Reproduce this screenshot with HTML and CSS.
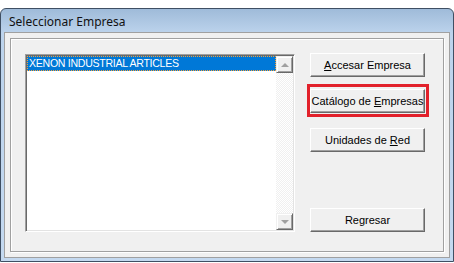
FILE: index.html
```html
<!DOCTYPE html>
<html lang="es">
<head>
    <meta charset="UTF-8">
    <title>Seleccionar Empresa</title>
    <link rel="stylesheet" href="styles.css">
</head>
<body>
    <div class="window">
        <div class="titlebar">Seleccionar Empresa</div>
        <div class="client">
            <div class="group">
                <div class="listbox">
                    <div class="items">
                        <div class="item selected">XENON INDUSTRIAL ARTICLES</div>
                    </div>
                    <div class="scrollbar">
                        <div class="sb-btn"><span class="arrow up"></span></div>
                        <div class="sb-track"></div>
                        <div class="sb-btn"><span class="arrow down"></span></div>
                    </div>
                </div>
                <div class="actions">
                    <button class="btn btn-first"><u>A</u>ccesar Empresa</button>
                    <div class="highlight">
                        <button class="btn">Catálogo de <u>E</u>mpresas</button>
                    </div>
                    <button class="btn btn-red">Unidades de <u>R</u>ed</button>
                    <button class="btn btn-back">Regresar</button>
                </div>
            </div>
        </div>
    </div>
</body>
</html>
```

FILE: styles.css
```css
* {
    box-sizing: border-box;
    margin: 0;
    padding: 0;
}

body {
    background: #fff;
    font-family: "Liberation Sans", Arial, sans-serif;
    font-size: 11px;
    color: #000;
}

.window {
    margin-top: 8px;
    width: 454px;
    height: 254px;
    border: 1px solid #3f4f63;
    border-radius: 6px 6px 0 0;
    background: linear-gradient(#9fbbd9, #bcd3ec 24px, #c4d9f0);
    padding: 0 3px 3px 3px;
    display: flex;
    flex-direction: column;
}

.titlebar {
    height: 23px;
    padding-left: 5px;
    padding-top: 4px;
    font-family: "Noto Sans", sans-serif;
    font-size: 12px;
    color: #111;
}

.client {
    flex: 1;
    background: #f0f0f0;
    border: 1px solid #a0a0a0;
    padding: 5px 0 0 5px;
}

.group {
    width: 434px;
    height: 214px;
    border: 1px solid #a0a0a0;
    box-shadow: inset 1px 1px 0 #fff, 1px 1px 0 #fff;
    padding: 15px 0 0 14px;
    display: flex;
    gap: 15px;
}

.listbox {
    width: 270px;
    height: 178px;
    background: #fff;
    border-top: 1px solid #a0a0a0;
    border-left: 1px solid #a0a0a0;
    border-bottom: 1px solid #fff;
    border-right: 1px solid #fff;
    box-shadow: inset 1px 1px 0 #696969, inset -1px -1px 0 #e3e3e3;
    padding: 1px;
    display: flex;
}

.items {
    flex: 1;
}

.item {
    height: 15px;
    line-height: 15px;
    padding-left: 2px;
    white-space: nowrap;
    font-size: 10.6px;
    letter-spacing: -0.3px;
}

.item.selected {
    background: #0078d7;
    color: #fff;
    outline: 1px dotted #f7a13a;
    outline-offset: -1px;
}

.scrollbar {
    width: 17px;
    display: flex;
    flex-direction: column;
}

.sb-btn {
    height: 17px;
    background: #f0f0f0;
    border-top: 1px solid #f0f0f0;
    border-left: 1px solid #f0f0f0;
    border-right: 1px solid #696969;
    border-bottom: 1px solid #696969;
    box-shadow: inset 1px 1px 0 #fff, inset -1px -1px 0 #a0a0a0;
    display: flex;
    align-items: center;
    justify-content: center;
}

.sb-track {
    flex: 1;
    background: repeating-conic-gradient(#fff 0 25%, #f0f0f0 0 50%) 0 0 / 2px 2px;
}

.arrow {
    width: 0;
    height: 0;
    border-left: 4px solid transparent;
    border-right: 4px solid transparent;
}

.arrow.up {
    border-bottom: 4px solid #a0a0a0;
}

.arrow.down {
    border-top: 4px solid #a0a0a0;
}

.actions {
    margin-top: -1px;
    display: flex;
    flex-direction: column;
    align-items: flex-start;
}

.btn {
    width: 115px;
    height: 24px;
    background: #f0f0f0;
    border-top: 1px solid #fff;
    border-left: 1px solid #fff;
    border-right: 1px solid #696969;
    border-bottom: 1px solid #696969;
    box-shadow: inset -1px -1px 0 #a0a0a0;
    font-family: "Liberation Sans", Arial, sans-serif;
    font-size: 11px;
    color: #000;
    text-align: center;
}

.btn u {
    text-decoration-thickness: 1px;
    text-underline-offset: 1px;
}

.highlight {
    margin: 7px -4px 0 -3px;
    padding: 2px 1px 1px 0;
    border: 3px solid #e2212b;
}

.btn-red {
    margin-top: 11px;
}

.btn-back {
    margin-top: 56px;
}
```
